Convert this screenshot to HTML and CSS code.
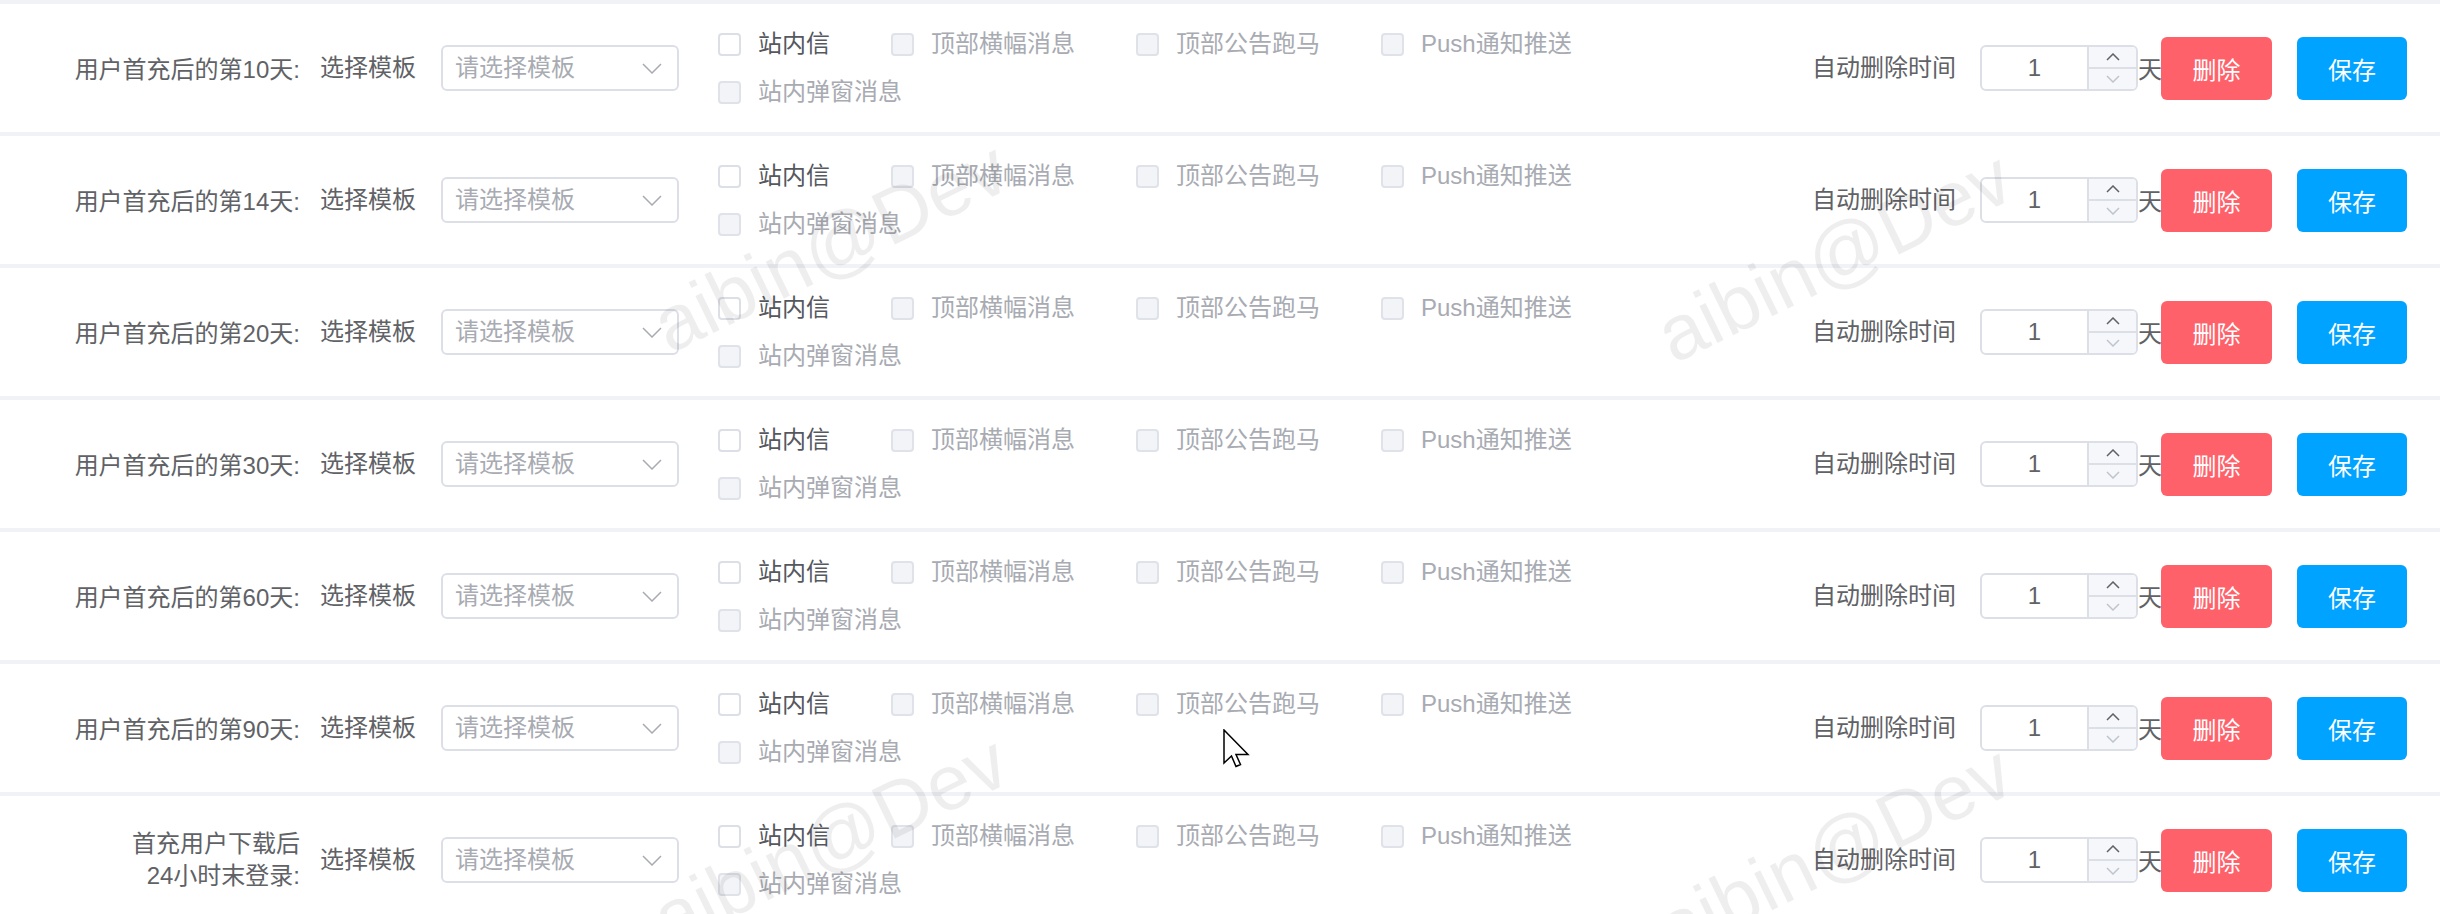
FILE: index.html
```html
<!DOCTYPE html>
<html lang="zh-CN">
<head>
<meta charset="utf-8">
<title>首充消息配置</title>
<link rel="stylesheet" href="styles.css">
</head>
<body>
<div class="page">

  <div class="row">
    <div class="row-label">用户首充后的第10天:</div>
    <div class="field-label">选择模板</div>
    <div class="select"><span class="placeholder">请选择模板</span><svg class="chev" viewBox="0 0 20 11"><path d="M1 1 L10 10 L19 1"/></svg></div>
    <div class="checks">
      <div class="check"><span class="box"></span><span class="ctext">站内信</span></div>
      <div class="check disabled"><span class="box"></span><span class="ctext">顶部横幅消息</span></div>
      <div class="check disabled"><span class="box"></span><span class="ctext">顶部公告跑马</span></div>
      <div class="check disabled"><span class="box"></span><span class="ctext">Push通知推送</span></div>
      <div class="check disabled"><span class="box"></span><span class="ctext">站内弹窗消息</span></div>
    </div>
    <div class="right">
      <span class="field-label del-label">自动删除时间</span>
      <div class="number"><span class="num-val">1</span><div class="num-ctrl"><span class="up"><svg viewBox="0 0 14 8"><path d="M1 7 L7 1 L13 7"/></svg></span><span class="down"><svg viewBox="0 0 14 8"><path d="M1 1 L7 7 L13 1"/></svg></span></div></div>
      <span class="unit">天</span>
      <button class="btn danger">删除</button>
      <button class="btn primary">保存</button>
    </div>
  </div>

  <div class="row">
    <div class="row-label">用户首充后的第14天:</div>
    <div class="field-label">选择模板</div>
    <div class="select"><span class="placeholder">请选择模板</span><svg class="chev" viewBox="0 0 20 11"><path d="M1 1 L10 10 L19 1"/></svg></div>
    <div class="checks">
      <div class="check"><span class="box"></span><span class="ctext">站内信</span></div>
      <div class="check disabled"><span class="box"></span><span class="ctext">顶部横幅消息</span></div>
      <div class="check disabled"><span class="box"></span><span class="ctext">顶部公告跑马</span></div>
      <div class="check disabled"><span class="box"></span><span class="ctext">Push通知推送</span></div>
      <div class="check disabled"><span class="box"></span><span class="ctext">站内弹窗消息</span></div>
    </div>
    <div class="right">
      <span class="field-label del-label">自动删除时间</span>
      <div class="number"><span class="num-val">1</span><div class="num-ctrl"><span class="up"><svg viewBox="0 0 14 8"><path d="M1 7 L7 1 L13 7"/></svg></span><span class="down"><svg viewBox="0 0 14 8"><path d="M1 1 L7 7 L13 1"/></svg></span></div></div>
      <span class="unit">天</span>
      <button class="btn danger">删除</button>
      <button class="btn primary">保存</button>
    </div>
  </div>

  <div class="row">
    <div class="row-label">用户首充后的第20天:</div>
    <div class="field-label">选择模板</div>
    <div class="select"><span class="placeholder">请选择模板</span><svg class="chev" viewBox="0 0 20 11"><path d="M1 1 L10 10 L19 1"/></svg></div>
    <div class="checks">
      <div class="check"><span class="box"></span><span class="ctext">站内信</span></div>
      <div class="check disabled"><span class="box"></span><span class="ctext">顶部横幅消息</span></div>
      <div class="check disabled"><span class="box"></span><span class="ctext">顶部公告跑马</span></div>
      <div class="check disabled"><span class="box"></span><span class="ctext">Push通知推送</span></div>
      <div class="check disabled"><span class="box"></span><span class="ctext">站内弹窗消息</span></div>
    </div>
    <div class="right">
      <span class="field-label del-label">自动删除时间</span>
      <div class="number"><span class="num-val">1</span><div class="num-ctrl"><span class="up"><svg viewBox="0 0 14 8"><path d="M1 7 L7 1 L13 7"/></svg></span><span class="down"><svg viewBox="0 0 14 8"><path d="M1 1 L7 7 L13 1"/></svg></span></div></div>
      <span class="unit">天</span>
      <button class="btn danger">删除</button>
      <button class="btn primary">保存</button>
    </div>
  </div>

  <div class="row">
    <div class="row-label">用户首充后的第30天:</div>
    <div class="field-label">选择模板</div>
    <div class="select"><span class="placeholder">请选择模板</span><svg class="chev" viewBox="0 0 20 11"><path d="M1 1 L10 10 L19 1"/></svg></div>
    <div class="checks">
      <div class="check"><span class="box"></span><span class="ctext">站内信</span></div>
      <div class="check disabled"><span class="box"></span><span class="ctext">顶部横幅消息</span></div>
      <div class="check disabled"><span class="box"></span><span class="ctext">顶部公告跑马</span></div>
      <div class="check disabled"><span class="box"></span><span class="ctext">Push通知推送</span></div>
      <div class="check disabled"><span class="box"></span><span class="ctext">站内弹窗消息</span></div>
    </div>
    <div class="right">
      <span class="field-label del-label">自动删除时间</span>
      <div class="number"><span class="num-val">1</span><div class="num-ctrl"><span class="up"><svg viewBox="0 0 14 8"><path d="M1 7 L7 1 L13 7"/></svg></span><span class="down"><svg viewBox="0 0 14 8"><path d="M1 1 L7 7 L13 1"/></svg></span></div></div>
      <span class="unit">天</span>
      <button class="btn danger">删除</button>
      <button class="btn primary">保存</button>
    </div>
  </div>

  <div class="row">
    <div class="row-label">用户首充后的第60天:</div>
    <div class="field-label">选择模板</div>
    <div class="select"><span class="placeholder">请选择模板</span><svg class="chev" viewBox="0 0 20 11"><path d="M1 1 L10 10 L19 1"/></svg></div>
    <div class="checks">
      <div class="check"><span class="box"></span><span class="ctext">站内信</span></div>
      <div class="check disabled"><span class="box"></span><span class="ctext">顶部横幅消息</span></div>
      <div class="check disabled"><span class="box"></span><span class="ctext">顶部公告跑马</span></div>
      <div class="check disabled"><span class="box"></span><span class="ctext">Push通知推送</span></div>
      <div class="check disabled"><span class="box"></span><span class="ctext">站内弹窗消息</span></div>
    </div>
    <div class="right">
      <span class="field-label del-label">自动删除时间</span>
      <div class="number"><span class="num-val">1</span><div class="num-ctrl"><span class="up"><svg viewBox="0 0 14 8"><path d="M1 7 L7 1 L13 7"/></svg></span><span class="down"><svg viewBox="0 0 14 8"><path d="M1 1 L7 7 L13 1"/></svg></span></div></div>
      <span class="unit">天</span>
      <button class="btn danger">删除</button>
      <button class="btn primary">保存</button>
    </div>
  </div>

  <div class="row">
    <div class="row-label">用户首充后的第90天:</div>
    <div class="field-label">选择模板</div>
    <div class="select"><span class="placeholder">请选择模板</span><svg class="chev" viewBox="0 0 20 11"><path d="M1 1 L10 10 L19 1"/></svg></div>
    <div class="checks">
      <div class="check"><span class="box"></span><span class="ctext">站内信</span></div>
      <div class="check disabled"><span class="box"></span><span class="ctext">顶部横幅消息</span></div>
      <div class="check disabled"><span class="box"></span><span class="ctext">顶部公告跑马</span></div>
      <div class="check disabled"><span class="box"></span><span class="ctext">Push通知推送</span></div>
      <div class="check disabled"><span class="box"></span><span class="ctext">站内弹窗消息</span></div>
    </div>
    <div class="right">
      <span class="field-label del-label">自动删除时间</span>
      <div class="number"><span class="num-val">1</span><div class="num-ctrl"><span class="up"><svg viewBox="0 0 14 8"><path d="M1 7 L7 1 L13 7"/></svg></span><span class="down"><svg viewBox="0 0 14 8"><path d="M1 1 L7 7 L13 1"/></svg></span></div></div>
      <span class="unit">天</span>
      <button class="btn danger">删除</button>
      <button class="btn primary">保存</button>
    </div>
  </div>

  <div class="row">
    <div class="row-label two-line">首充用户下载后<br>24小时末登录:</div>
    <div class="field-label">选择模板</div>
    <div class="select"><span class="placeholder">请选择模板</span><svg class="chev" viewBox="0 0 20 11"><path d="M1 1 L10 10 L19 1"/></svg></div>
    <div class="checks">
      <div class="check"><span class="box"></span><span class="ctext">站内信</span></div>
      <div class="check disabled"><span class="box"></span><span class="ctext">顶部横幅消息</span></div>
      <div class="check disabled"><span class="box"></span><span class="ctext">顶部公告跑马</span></div>
      <div class="check disabled"><span class="box"></span><span class="ctext">Push通知推送</span></div>
      <div class="check disabled"><span class="box"></span><span class="ctext">站内弹窗消息</span></div>
    </div>
    <div class="right">
      <span class="field-label del-label">自动删除时间</span>
      <div class="number"><span class="num-val">1</span><div class="num-ctrl"><span class="up"><svg viewBox="0 0 14 8"><path d="M1 7 L7 1 L13 7"/></svg></span><span class="down"><svg viewBox="0 0 14 8"><path d="M1 1 L7 7 L13 1"/></svg></span></div></div>
      <span class="unit">天</span>
      <button class="btn danger">删除</button>
      <button class="btn primary">保存</button>
    </div>
  </div>

</div>

<div class="watermark" aria-hidden="true">
  <span class="wm wm-1">aibin@Dev</span>
  <span class="wm wm-2">aibin@Dev</span>
  <span class="wm wm-3">aibin@Dev</span>
  <span class="wm wm-4">aibin@Dev</span>
  <span class="wm wm-5">aibin@Dev</span>
  <span class="wm wm-6">aibin@Dev</span>
</div>

<svg class="cursor" viewBox="0 0 27 39" aria-hidden="true"><path d="M1 1 L1 34 L8.5 27 L13 37.5 L17.5 35.5 L13 25.5 L25 25.5 Z"/></svg>
</body>
</html>
```

FILE: styles.css
```css
* { box-sizing: border-box; }

html, body {
  margin: 0;
  padding: 0;
}

body {
  background: #f0f2f5;
  font-family: "Liberation Sans", "Noto Sans CJK SC", sans-serif;
  font-size: 24px;
  color: #606266;
  width: 2440px;
  height: 914px;
  overflow: hidden;
  position: relative;
}

.page {
  padding-top: 4px;
  display: flex;
  flex-direction: column;
  gap: 4px;
}

.row {
  height: 128px;
  flex: none;
  background: #fff;
  display: flex;
  align-items: center;
}

.row-label {
  width: 300px;
  flex: none;
  text-align: right;
  line-height: 32px;
  color: #606266;
  padding-top: 4px;
}

.row-label.two-line {
  line-height: 32px;
  padding-top: 0;
}

.field-label {
  flex: none;
  margin-left: 20px;
  line-height: 32px;
  color: #606266;
}

.select {
  flex: none;
  margin-left: 25px;
  width: 238px;
  height: 46px;
  border: 2px solid #dcdfe6;
  border-radius: 6px;
  display: flex;
  align-items: center;
  justify-content: space-between;
  padding: 0 15px 0 12px;
  background: #fff;
}

.placeholder {
  color: #a8abb2;
  line-height: 32px;
}

.chev {
  width: 20px;
  height: 11px;
}

.chev path {
  fill: none;
  stroke: #a8abb2;
  stroke-width: 1.5;
}

.checks {
  flex: none;
  margin-left: 39px;
  width: 920px;
  display: flex;
  flex-wrap: wrap;
  column-gap: 61px;
}

.check {
  display: flex;
  align-items: center;
  height: 48px;
}

.box {
  width: 23px;
  height: 23px;
  border: 2px solid #dcdfe6;
  border-radius: 4px;
  background: #fff;
  margin-right: 17px;
  flex: none;
}

.ctext {
  color: #55585e;
  line-height: 32px;
}

.check.disabled .box {
  background: #f2f4f8;
  border-color: #dfe2e8;
}

.check.disabled .ctext {
  color: #a8abb2;
}

.right {
  margin-left: auto;
  margin-right: 33px;
  display: flex;
  align-items: center;
}

.del-label {
  margin-left: 0;
  margin-right: 24px;
}

.number {
  width: 158px;
  height: 46px;
  border: 2px solid #dcdfe6;
  border-radius: 6px;
  display: flex;
  overflow: hidden;
  background: #fff;
}

.num-val {
  flex: 1;
  text-align: center;
  line-height: 42px;
  color: #606266;
}

.num-ctrl {
  width: 49px;
  flex: none;
  border-left: 2px solid #dcdfe6;
  background: #f5f7fa;
  display: flex;
  flex-direction: column;
}

.num-ctrl .up,
.num-ctrl .down {
  flex: 1;
  display: flex;
  align-items: center;
  justify-content: center;
}

.num-ctrl .up {
  border-bottom: 2px solid #dcdfe6;
}

.num-ctrl svg {
  width: 14px;
  height: 8px;
}

.num-ctrl .up path {
  fill: none;
  stroke: #606266;
  stroke-width: 1.5;
}

.num-ctrl .down path {
  fill: none;
  stroke: #c0c4cc;
  stroke-width: 1.5;
}

.unit {
  color: #606266;
  line-height: 32px;
  margin-right: -1px;
  position: relative;
  top: 2px;
}

.btn {
  height: 63px;
  border: none;
  border-radius: 6px;
  color: #fff;
  font-family: "Liberation Sans", "Noto Sans CJK SC", sans-serif;
  font-size: 24px;
  padding: 0;
  cursor: pointer;
}

.btn.danger {
  width: 111px;
  background: #ff616a;
}

.btn.primary {
  width: 110px;
  margin-left: 25px;
  background: #00a3ff;
}

.watermark {
  position: absolute;
  left: 0;
  top: 0;
  width: 2440px;
  height: 914px;
  pointer-events: none;
  overflow: hidden;
}

.wm {
  position: absolute;
  font-family: "Liberation Sans", sans-serif;
  font-size: 78px;
  line-height: 1;
  white-space: nowrap;
  color: rgba(0, 0, 0, 0.065);
  transform: translate(-50%, -50%) rotate(-26deg);
}

.wm-1 { left: -172px; top: 246px; }
.wm-2 { left: 830px;  top: 246px; }
.wm-3 { left: 1834px; top: 256px; }
.wm-4 { left: -172px; top: 840px; }
.wm-5 { left: 830px;  top: 840px; }
.wm-6 { left: 1834px; top: 850px; }

.cursor {
  position: absolute;
  left: 1223px;
  top: 729px;
  width: 27px;
  height: 39px;
}

.cursor path {
  fill: #fff;
  stroke: #000;
  stroke-width: 1.5;
  stroke-linejoin: miter;
}
```
